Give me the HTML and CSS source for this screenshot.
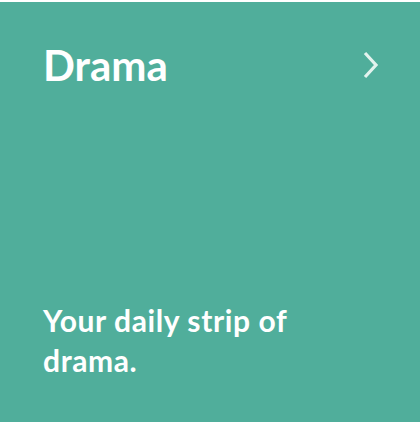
FILE: index.html
```html
<!DOCTYPE html>
<html>
<head>
<meta charset="utf-8">
<link rel="stylesheet" href="styles.css">
</head>
<body>
<div class="card">
  <div class="head">
    <h2 class="title">Drama</h2>
    <svg class="chev" width="18" height="28" viewBox="0 0 18 28"><path d="M3 2 L14 14 L3 26" fill="none" stroke="#e3f3ee" stroke-width="3.2" stroke-linecap="butt" stroke-linejoin="miter"/></svg>
  </div>
  <p class="desc">Your daily strip of drama.</p>
</div>
</body>
</html>
```
FILE: styles.css
```css
html, body { margin: 0; padding: 0; background: #fff; }
body { padding-top: 2px; }
.card {
  box-sizing: border-box;
  width: 420px;
  height: 420px;
  background: #50ae9b;
  color: #fff;
  font-family: Lato, "Open Sans", sans-serif;
  padding: 37px 40px 42px 43px;
  display: flex;
  flex-direction: column;
  justify-content: space-between;
}
.head { display: flex; justify-content: space-between; align-items: center; }
.title { margin: 0; font-size: 42px; font-weight: 700; line-height: 52px; }
.desc { margin: 0; font-size: 30px; font-weight: 700; line-height: 40px; letter-spacing: 0.6px; width: 280px; }
```
